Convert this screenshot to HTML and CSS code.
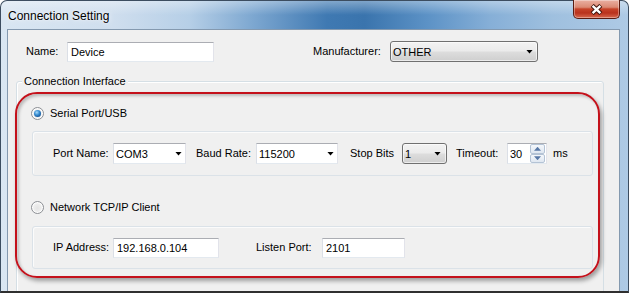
FILE: index.html
```html
<!DOCTYPE html>
<html>
<head>
<meta charset="utf-8">
<title>Connection Setting</title>
<link rel="stylesheet" href="styles.css">
</head>
<body>
<div class="window">
  <div class="titlebar">
    <span class="title">Connection Setting</span>
    <div class="close">
      <svg width="13" height="11" viewBox="0 0 13 11">
        <path d="M2.2 1.5 L10.8 9.5 M10.8 1.5 L2.2 9.5" stroke="#3d140d" stroke-width="4.4" fill="none"/>
        <path d="M2.6 1.9 L10.4 9.1 M10.4 1.9 L2.6 9.1" stroke="#ffffff" stroke-width="2.4" fill="none"/>
      </svg>
    </div>
  </div>
  <div class="client">
    <div class="top-row">
      <span class="lbl w-name">Name:</span>
      <div class="textbox tb-name">Device</div>
      <span class="lbl w-manu ml-manu">Manufacturer:</span>
      <div class="combo-list cb-manu"><span>OTHER</span><i class="arrow"></i></div>
    </div>
    <div class="group">
      <span class="legend">Connection Interface</span>
      <div class="radio-row first">
        <span class="radio checked"></span>
        <span class="radio-text">Serial Port/USB</span>
      </div>
      <div class="panel panel-serial">
        <span class="lbl w60">Port Name:</span>
        <div class="combo-edit cb-port"><span>COM3</span><i class="arrow"></i></div>
        <span class="lbl w60 ml10">Baud Rate:</span>
        <div class="combo-edit cb-baud"><span>115200</span><i class="arrow"></i></div>
        <span class="lbl w52 ml12">Stop Bits</span>
        <div class="combo-list cb-stop"><span>1</span><i class="arrow"></i></div>
        <span class="lbl w51 ml9">Timeout:</span>
        <div class="spin">
          <span class="spin-val">30</span>
          <div class="spin-btns">
            <span class="spin-btn"><i class="tri-up"></i></span>
            <span class="spin-btn"><i class="tri-down"></i></span>
          </div>
        </div>
        <span class="lbl ml6">ms</span>
      </div>
      <div class="radio-row second">
        <span class="radio"></span>
        <span class="radio-text">Network TCP/IP Client</span>
      </div>
      <div class="panel panel-net">
        <span class="lbl w60">IP Address:</span>
        <div class="textbox tb-ip">192.168.0.104</div>
        <span class="lbl w66 ml37">Listen Port:</span>
        <div class="textbox tb-port">2101</div>
      </div>
    </div>
  </div>
  <div class="highlight"></div>
</div>
</body>
</html>
```
FILE: styles.css
```css
* { box-sizing: border-box; }
html, body { margin: 0; padding: 0; background: #ffffff; }
body {
  font-family: "Liberation Sans", Arial, sans-serif;
  font-size: 11px;
  color: #000;
  width: 631px;
  height: 295px;
  overflow: hidden;
}

.window {
  position: relative;
  width: 629px;
  height: 293px;
  border: 1px solid #3c4d60;
  border-bottom: 2px solid #2f2f2f;
  border-radius: 7px 7px 0 0;
  padding: 0 8px 0 6px;
  display: flex;
  flex-direction: column;
  background:
    linear-gradient(to bottom, rgba(255,255,255,0.35), rgba(255,255,255,0) 14px),
    linear-gradient(to right, #d9e6f2 0%, #cfdeee 18%, #b6cfe7 30%, #7ea8d1 40%, #3f79b2 52%, #3a74ad 58%, #5c92c6 68%, #86afd7 78%, #9fc0df 88%, #aecae5 100%);
}

.titlebar {
  height: 28px;
  display: flex;
  justify-content: space-between;
  align-items: flex-start;
}
.title {
  margin: 8px 0 0 1px;
  font-size: 12px;
  line-height: 14px;
  color: #000;
  text-shadow: 0 0 6px rgba(255,255,255,0.9), 0 0 2px rgba(255,255,255,0.8);
}
.close {
  width: 47px;
  height: 19px;
  margin-top: -1px;
  border: 1px solid #5a1c12;
  border-top: none;
  border-radius: 0 0 5px 5px;
  background: linear-gradient(to bottom, #eab0a2 0%, #db8a74 40%, #c64329 50%, #b9321d 72%, #d7694e 100%);
  box-shadow: inset 0 0 0 1px rgba(255,255,255,0.35);
  display: flex;
  align-items: center;
  justify-content: center;
}

.client {
  flex: 1;
  background: #f0f0f0;
  border: 1px solid #8499af;
  border-bottom: none;
  overflow: hidden;
}

.top-row {
  display: flex;
  align-items: center;
  height: 21px;
  margin-top: 11px;
  padding-left: 18px;
}

.lbl { white-space: nowrap; line-height: 13px; }
.w-name { width: 41px; }
.w-manu { width: 77px; }
.ml-manu { margin-left: 99px; }
.w60 { width: 60px; }
.w52 { width: 52px; }
.w51 { width: 51px; }
.w66 { width: 66px; }
.ml10 { margin-left: 10px; }
.ml12 { margin-left: 12px; }
.ml9 { margin-left: 9px; }
.ml6 { margin-left: 6px; }
.ml37 { margin-left: 37px; }

.textbox {
  height: 20px;
  background: #fff;
  border: 1px solid;
  border-color: #abadb3 #e2e3ea #e3e9ef #dbdfe6;
  display: flex;
  align-items: center;
  padding-left: 3px;
  white-space: nowrap;
}
.tb-name { width: 147px; }
.tb-ip { width: 106px; }
.tb-port { width: 83px; }

.arrow {
  display: block;
  width: 7px;
  height: 4px;
  background: #000;
  clip-path: polygon(0 0, 100% 0, 50% 100%);
}

.combo-edit {
  height: 21px;
  background: #fff;
  border: 1px solid;
  border-color: #abadb3 #e2e3ea #e3e9ef #dbdfe6;
  display: flex;
  align-items: center;
  justify-content: space-between;
  padding: 0 3px 0 2px;
}
.cb-port { width: 73px; }
.cb-baud { width: 82px; }

.combo-list {
  height: 21px;
  border: 1px solid #707070;
  border-radius: 3px;
  background: linear-gradient(to bottom, #f3f3f3 0%, #ebebeb 48%, #dddddd 52%, #cfcfcf 100%);
  box-shadow: inset 0 0 0 1px rgba(255,255,255,0.6);
  display: flex;
  align-items: center;
  justify-content: space-between;
  padding: 0 4px 0 2px;
}
.cb-manu { width: 148px; }
.cb-stop { width: 45px; padding-right: 5px; }

.group {
  margin: 19px 15px 0 8px;
  min-height: 260px;
  border: 1px solid #d5dfe5;
  border-radius: 3px;
  box-shadow: inset 1px 1px 0 #ffffff;
}
.legend {
  display: block;
  width: fit-content;
  margin: -7px 0 0 5px;
  padding: 0 2px;
  line-height: 13px;
  background: #f0f0f0;
}

.radio-row {
  display: flex;
  align-items: center;
  height: 16px;
  padding-left: 14px;
}
.radio-row.first { margin-top: 17px; }
.radio-row.second { margin-top: 23px; }
.radio-text { margin-left: 6px; }

.radio {
  position: relative;
  width: 13px;
  height: 13px;
  border-radius: 50%;
  border: 1px solid #8c8f94;
  background: radial-gradient(circle at 50% 55%, #e4e4e4 0%, #ededed 45%, #f8f8f8 75%, #d6d6d6 100%);
  box-shadow: inset 0 0 0 1px #fdfdfd;
}
.radio.checked::after {
  content: "";
  position: absolute;
  left: 2px;
  top: 2px;
  width: 7px;
  height: 7px;
  border-radius: 50%;
  background: radial-gradient(circle at 40% 35%, #a9dbfb 0%, #3a8fd3 40%, #15589c 75%, #0d3a6c 100%);
}

.panel {
  display: flex;
  align-items: center;
  margin: 10px 10px 0 15px;
  padding-left: 20px;
  border: 1px solid #dbe2e8;
  border-radius: 3px;
  box-shadow: inset 1px 1px 0 #fbfbfb;
}
.panel-serial { height: 45px; }
.panel-net { height: 43px; margin-top: 11px; }

.spin {
  width: 40px;
  height: 21px;
  background: #fff;
  border: 1px solid;
  border-color: #abadb3 #e2e3ea #e3e9ef #dbdfe6;
  display: flex;
  align-items: center;
  justify-content: space-between;
  padding-left: 2px;
}
.spin-btns {
  display: flex;
  flex-direction: column;
  width: 15px;
  height: 19px;
  margin-right: 1px;
}
.spin-btn {
  flex: 1;
  border: 1px solid #b4c3d5;
  border-radius: 2px;
  background: linear-gradient(to bottom, #f4f7fb, #dfe7f1);
  display: flex;
  align-items: center;
  justify-content: center;
}
.tri-up, .tri-down {
  display: block;
  width: 7px;
  height: 4px;
  background: #5878a6;
}
.tri-up { clip-path: polygon(50% 0, 100% 100%, 0 100%); }
.tri-down { clip-path: polygon(0 0, 100% 0, 50% 100%); }

.highlight {
  position: absolute;
  left: 14px;
  top: 91px;
  width: 585px;
  height: 186px;
  border: 2px solid #c4111b;
  border-radius: 22px;
  box-shadow: 2px 3px 4px rgba(0,0,0,0.35), inset 2px 2px 3px rgba(0,0,0,0.22);
  pointer-events: none;
}
```
